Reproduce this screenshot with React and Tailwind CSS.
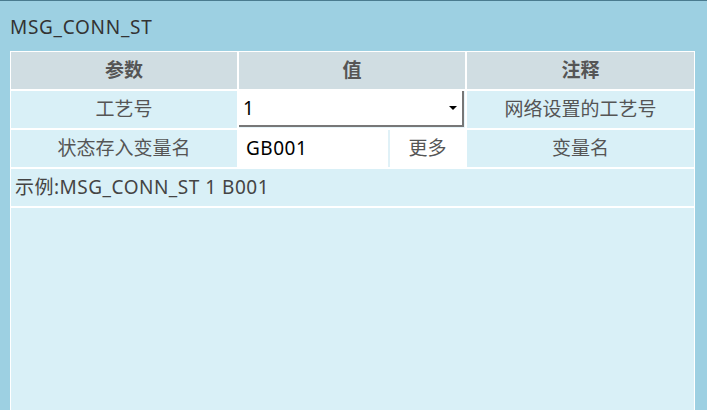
import React from "react";

const font = { fontFamily: '"Noto Sans", "Noto Sans CJK SC", sans-serif' };

const HeadCell = ({ children }) => (
  <div className="h-[37px] bg-[#d0dde2] flex items-center justify-center text-[19px] font-bold text-[#555]">
    {children}
  </div>
);

const Cell = ({ children }) => (
  <div className="h-[37px] bg-[#d9f0f7] flex items-center justify-center text-[19px] text-[#555]">
    {children}
  </div>
);

export default function App() {
  return (
    <div
      className="w-[707px] h-[410px] bg-[#9dd0e2] border-t border-[#4a7b8f] overflow-hidden flex flex-col"
      style={font}
    >
      <div className="h-[50px] pl-[10px] pt-[13px] text-[19px] leading-[26px] tracking-[0.7px] text-[#333]">MSG_CONN_ST</div>
      <div className="ml-[10px] w-[685px] flex-1 bg-white px-px pt-px flex flex-col gap-[2px]">
        <div className="grid grid-cols-[226px_226px_227px] gap-[2px]">
          <HeadCell>参数</HeadCell>
          <HeadCell>值</HeadCell>
          <HeadCell>注释</HeadCell>
        </div>
        <div className="grid grid-cols-[226px_226px_227px] gap-[2px]">
          <Cell>工艺号</Cell>
          <div className="h-[37px] bg-[#e6f4f9] pr-px pb-px">
            <div className="h-full bg-white relative flex items-center pl-[4px] text-[19px] text-black border-r-2 border-b-2 border-[#777]">
              1
              <span className="absolute right-[5px] top-[15px] w-0 h-0 border-l-[4px] border-r-[4px] border-t-[4px] border-l-transparent border-r-transparent border-t-black"></span>
            </div>
          </div>
          <Cell>网络设置的工艺号</Cell>
          <Cell>状态存入变量名</Cell>
          <div className="h-[37px] flex gap-[2px] bg-[#e0f1f7]">
            <div className="w-[149px] bg-white flex items-center pl-[7px] text-[19px] tracking-[0.5px] text-black">GB001</div>
            <div className="flex-1 bg-white flex items-center justify-center text-[19px] text-[#555]">更多</div>
          </div>
          <Cell>变量名</Cell>
        </div>
        <div className="h-[37px] bg-[#d9f0f7] flex items-center pl-[4px] text-[19px] tracking-[0.5px] text-[#444]">
          示例:MSG_CONN_ST 1 B001
        </div>
        <div className="flex-1 bg-[#d9f0f7]"></div>
      </div>
    </div>
  );
}
